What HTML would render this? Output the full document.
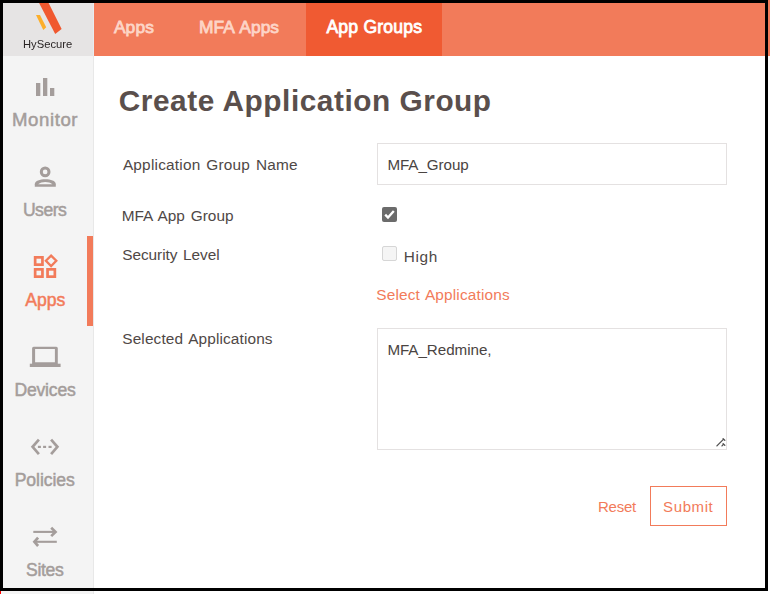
<!DOCTYPE html>
<html><head><meta charset="utf-8">
<style>
html,body{margin:0;padding:0;}
body{width:770px;height:594px;position:relative;overflow:hidden;background:#fff;font-family:"Liberation Sans",sans-serif;}
.t{position:absolute;white-space:nowrap;}
.a{position:absolute;}
</style></head><body>
<!-- outer strips beyond border -->
<div class="a" style="left:768px;top:0;width:2px;height:594px;background:#fff;"></div>
<div class="a" style="left:768px;top:0;width:2px;height:56px;background:#f27b5a;"></div>
<div class="a" style="left:0;top:591px;width:1px;height:3px;background:#f00;"></div>
<!-- sidebar -->
<div class="a" style="left:1px;top:3px;width:92px;height:591px;background:#f4f4f4;"></div>
<div class="a" style="left:93px;top:56px;width:1px;height:538px;background:#e8e8e8;"></div>
<div class="a" style="left:3px;top:3px;width:90px;height:53px;background:#e6e4e4;"></div>
<div class="a" style="left:93px;top:3px;width:1px;height:53px;background:#e9ecef;"></div>
<!-- header -->
<div class="a" style="left:94px;top:3px;width:674px;height:53px;background:#f27b5a;"></div>
<div class="a" style="left:306px;top:3px;width:136px;height:53px;background:#f05a32;"></div>
<!-- active bar -->
<div class="a" style="left:87px;top:236px;width:6px;height:90px;background:#f27b5a;"></div>
<!-- logo -->
<svg class="a" style="left:0;top:0" width="94" height="56" viewBox="0 0 94 56">
<polygon points="39.1,3 48.6,3 61.6,28.9 55.2,34.1" fill="#f0582f"/>
<polygon points="36,15.1 40,15.1 46.2,27.3 43.3,30" fill="#fcae2a"/>
</svg>
<!-- icons -->
<svg class="a" style="left:0;top:56px" width="93" height="535" viewBox="0 56 93 535">
<g fill="#a49d9b">
<rect x="36" y="83" width="4.3" height="13"/>
<rect x="43" y="78" width="4.3" height="18"/>
<rect x="50" y="88" width="4.3" height="8"/>
</g>
<circle cx="45.15" cy="171.9" r="3.85" fill="none" stroke="#a49d9b" stroke-width="3"/>
<path d="M34.8 186.8 L34.8 184.2 C34.8 180.6 40 179.2 45.3 179.2 C50.6 179.2 55.8 180.6 55.8 184.2 L55.8 186.8 Z" fill="#a49d9b"/>
<path d="M38.2 184.3 C40 182.7 42.5 182 45.3 182 C48.1 182 50.6 182.7 52.4 184.3 Z" fill="#f4f4f4"/>
<g fill="none" stroke="#f27b5a" stroke-width="2.7">
<rect x="35.15" y="257.35" width="7.3" height="7.3"/>
<rect x="35.15" y="269.35" width="7.3" height="7.3"/>
<rect x="47.55" y="269.35" width="7.3" height="7.3"/>
<polygon points="51.1,255.6 56.3,260.8 51.1,266 45.9,260.8" stroke-width="2.3"/>
</g>
<path fill="#a49d9b" fill-rule="evenodd" d="M33.6 346.8 H56.3 Q57.8 346.8 57.8 348.3 V364 H32.1 V348.3 Q32.1 346.8 33.6 346.8 Z M35.1 349.1 V362.2 H54.9 V349.1 Z"/>
<rect x="29.8" y="363.7" width="30.8" height="3.3" fill="#a49d9b"/>
<g fill="none" stroke="#a49d9b" stroke-width="2.7" stroke-linecap="butt">
<polyline points="38.9,439.7 32.6,446.8 38.9,454.1"/>
<polyline points="51.1,439.7 57.4,446.8 51.1,454.1"/>
</g>
<g fill="#a49d9b">
<rect x="37.9" y="445.8" width="3" height="2.2"/>
<rect x="43.1" y="445.8" width="3" height="2.2"/>
<rect x="48.5" y="445.8" width="3.1" height="2.2"/>
</g>
<g fill="none" stroke="#a49d9b" stroke-width="2.1">
<line x1="33.3" y1="531.9" x2="55" y2="531.9"/>
<line x1="35" y1="541.8" x2="56.8" y2="541.8"/>
</g>
<g fill="none" stroke="#a49d9b" stroke-width="2.7">
<polyline points="51.2,527.7 55.5,531.9 51.2,536.1"/>
<polyline points="38.1,537.6 34.4,541.8 38.1,546"/>
</g>
</svg>
<!-- form controls -->
<div class="a" style="left:377px;top:143px;width:348px;height:40px;border:1px solid #e4e1e1;"></div>
<div class="a" style="left:382px;top:207px;width:15px;height:15px;background:#6b6b6b;border-radius:2px;"></div>
<svg class="a" style="left:382px;top:207px" width="15" height="15" viewBox="0 0 15 15"><polyline points="3.2,7.6 6,10.6 11.8,4" fill="none" stroke="#fff" stroke-width="2.3"/></svg>
<div class="a" style="left:382px;top:246px;width:13px;height:13px;background:#f5f5f5;border:1px solid #d6d6d6;border-radius:2px;"></div>
<div class="a" style="left:377px;top:328px;width:348px;height:120px;border:1px solid #e4e1e1;"></div>
<svg class="a" style="left:710px;top:432px" width="17" height="17" viewBox="710 432 17 17">
<g stroke="#505050" stroke-width="1.3" stroke-linecap="round">
<line x1="716.9" y1="445.9" x2="723.4" y2="439.4"/>
<line x1="723.1" y1="438.7" x2="724.8" y2="440.2"/>
<line x1="722" y1="445.9" x2="723.4" y2="444.4"/>
<line x1="723.1" y1="443.7" x2="724.8" y2="445.2"/>
</g></svg>
<div class="a" style="left:650px;top:486px;width:75px;height:38px;border:1px solid #f27b5a;"></div>
<!-- border -->
<div class="a" style="left:0;top:0;width:768px;height:591px;box-sizing:border-box;border:3px solid #000;"></div>
<!-- texts -->
<div class="t" style="left:113.90px;top:19.27px;font-size:17.40px;line-height:17.40px;font-weight:normal;color:#fdd5c7;letter-spacing:0.121px;-webkit-text-stroke:0.8px #fdd5c7;">Apps</div>
<div class="t" style="left:199.01px;top:19.27px;font-size:17.40px;line-height:17.40px;font-weight:normal;color:#fdd5c7;letter-spacing:0.000px;-webkit-text-stroke:0.8px #fdd5c7;word-spacing:1.7px;">MFA Apps</div>
<div class="t" style="left:326.40px;top:19.10px;font-size:17.60px;line-height:17.60px;font-weight:normal;color:#ffffff;letter-spacing:0.201px;-webkit-text-stroke:0.8px #ffffff;">App Groups</div>
<div class="t" style="left:23.20px;top:38.51px;font-size:11.21px;line-height:11.21px;font-weight:normal;color:#2a2525;letter-spacing:0.000px;will-change:transform;">HySecure</div>
<div class="t" style="left:12.06px;top:111.26px;font-size:18.60px;line-height:18.60px;font-weight:normal;color:#a49d9b;letter-spacing:0.585px;-webkit-text-stroke:0.5px #a49d9b;">Monitor</div>
<div class="t" style="left:22.92px;top:202.10px;font-size:17.60px;line-height:17.60px;font-weight:normal;color:#a49d9b;letter-spacing:-0.500px;-webkit-text-stroke:0.5px #a49d9b;">Users</div>
<div class="t" style="left:25.25px;top:292.10px;font-size:17.60px;line-height:17.60px;font-weight:normal;color:#f27b5a;letter-spacing:-0.029px;-webkit-text-stroke:0.5px #f27b5a;">Apps</div>
<div class="t" style="left:14.44px;top:382.10px;font-size:17.60px;line-height:17.60px;font-weight:normal;color:#a49d9b;letter-spacing:-0.210px;-webkit-text-stroke:0.5px #a49d9b;">Devices</div>
<div class="t" style="left:14.64px;top:472.10px;font-size:17.60px;line-height:17.60px;font-weight:normal;color:#a49d9b;letter-spacing:-0.059px;-webkit-text-stroke:0.5px #a49d9b;">Policies</div>
<div class="t" style="left:26.05px;top:562.10px;font-size:17.60px;line-height:17.60px;font-weight:normal;color:#a49d9b;letter-spacing:-0.349px;-webkit-text-stroke:0.5px #a49d9b;">Sites</div>
<div class="t" style="left:118.81px;top:85.77px;font-size:29.80px;line-height:29.80px;font-weight:bold;color:#5a4f4c;letter-spacing:0.542px;">Create Application Group</div>
<div class="t" style="left:122.90px;top:156.96px;font-size:15.40px;line-height:15.40px;font-weight:normal;color:#4f4846;letter-spacing:0.204px;word-spacing:1.4px;">Application Group Name</div>
<div class="t" style="left:121.67px;top:207.96px;font-size:15.40px;line-height:15.40px;font-weight:normal;color:#4f4846;letter-spacing:0.039px;word-spacing:1.4px;">MFA App Group</div>
<div class="t" style="left:122.28px;top:246.96px;font-size:15.40px;line-height:15.40px;font-weight:normal;color:#4f4846;letter-spacing:-0.058px;word-spacing:1.4px;">Security Level</div>
<div class="t" style="left:122.28px;top:330.96px;font-size:15.40px;line-height:15.40px;font-weight:normal;color:#4f4846;letter-spacing:0.127px;word-spacing:1.4px;">Selected Applications</div>
<div class="t" style="left:387.38px;top:157.13px;font-size:15.20px;line-height:15.20px;font-weight:normal;color:#4a4442;letter-spacing:-0.060px;">MFA_Group</div>
<div class="t" style="left:403.77px;top:248.96px;font-size:15.40px;line-height:15.40px;font-weight:normal;color:#4f4846;letter-spacing:0.641px;">High</div>
<div class="t" style="left:376.28px;top:286.96px;font-size:15.40px;line-height:15.40px;font-weight:normal;color:#f27b5a;letter-spacing:0.153px;word-spacing:1.4px;">Select Applications</div>
<div class="t" style="left:387.38px;top:342.13px;font-size:15.20px;line-height:15.20px;font-weight:normal;color:#4a4442;letter-spacing:-0.046px;">MFA_Redmine,</div>
<div class="t" style="left:598.00px;top:499.30px;font-size:15.00px;line-height:15.00px;font-weight:normal;color:#f27b5a;letter-spacing:-0.254px;">Reset</div>
<div class="t" style="left:663.10px;top:499.30px;font-size:15.00px;line-height:15.00px;font-weight:normal;color:#f27b5a;letter-spacing:0.597px;">Submit</div>
</body></html>
